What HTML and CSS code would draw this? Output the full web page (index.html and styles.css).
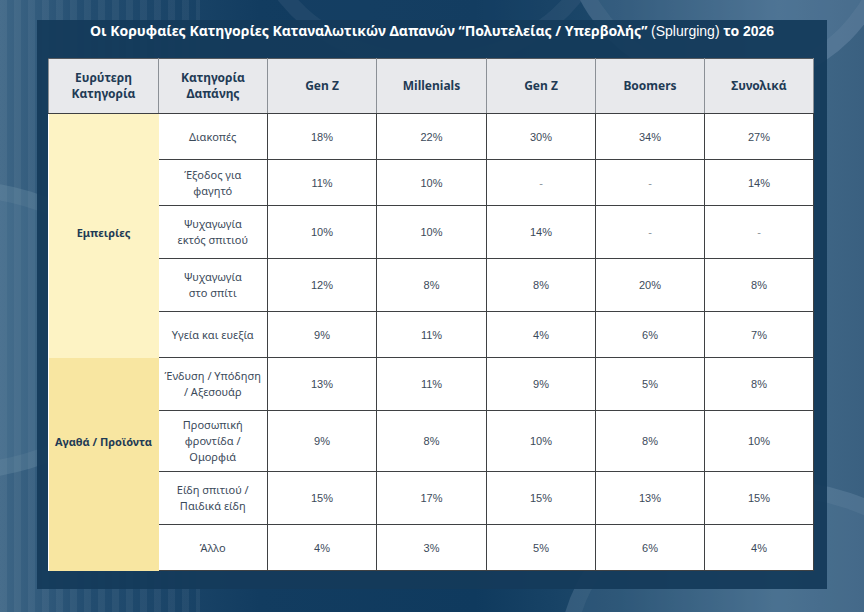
FILE: index.html
```html
<!DOCTYPE html>
<html lang="el">
<head>
<meta charset="utf-8">
<title>Κατηγορίες Δαπανών 2026</title>
<link rel="stylesheet" href="styles.css">
</head>
<body>
<div class="page">
  <div class="ring ring-a"></div>
  <div class="ring ring-b"></div>
  <div class="ring ring-c"></div>
  <div class="ring ring-d"></div>
  <div class="panel">
    <h1 class="title">Οι Κορυφαίες Κατηγορίες Καταναλωτικών Δαπανών “Πολυτελείας / Υπερβολής” <span class="light">(Splurging)</span> το <span class="year">2026</span></h1>
    <table class="grid">
      <colgroup>
        <col class="c1"><col class="c2"><col class="c3"><col class="c4"><col class="c5"><col class="c6"><col class="c7">
      </colgroup>
      <thead>
        <tr class="hrow">
          <th>Ευρύτερη<br>Κατηγορία</th>
          <th>Κατηγορία<br>Δαπάνης</th>
          <th>Gen Z</th>
          <th>Millenials</th>
          <th>Gen Z</th>
          <th>Boomers</th>
          <th>Συνολικά</th>
        </tr>
      </thead>
      <tbody>
        <tr class="r46">
          <td class="grp exp"></td>
          <td class="cat">Διακοπές</td>
          <td class="num">18%</td><td class="num">22%</td><td class="num">30%</td><td class="num">34%</td><td class="num">27%</td>
        </tr>
        <tr class="r46">
          <td class="grp exp"></td>
          <td class="cat">Έξοδος για<br>φαγητό</td>
          <td class="num">11%</td><td class="num">10%</td><td class="num dash">-</td><td class="num dash">-</td><td class="num">14%</td>
        </tr>
        <tr class="r53">
          <td class="grp exp">Εμπειρίες</td>
          <td class="cat">Ψυχαγωγία<br>εκτός σπιτιού</td>
          <td class="num">10%</td><td class="num">10%</td><td class="num">14%</td><td class="num dash">-</td><td class="num dash">-</td>
        </tr>
        <tr class="r53">
          <td class="grp exp"></td>
          <td class="cat">Ψυχαγωγία<br>στο σπίτι</td>
          <td class="num">12%</td><td class="num">8%</td><td class="num">8%</td><td class="num">20%</td><td class="num">8%</td>
        </tr>
        <tr class="r46">
          <td class="grp exp"></td>
          <td class="cat">Υγεία και ευεξία</td>
          <td class="num">9%</td><td class="num">11%</td><td class="num">4%</td><td class="num">6%</td><td class="num">7%</td>
        </tr>
        <tr class="r53">
          <td class="grp goods"></td>
          <td class="cat">Ένδυση / Υπόδηση<br>/ Αξεσουάρ</td>
          <td class="num">13%</td><td class="num">11%</td><td class="num">9%</td><td class="num">5%</td><td class="num">8%</td>
        </tr>
        <tr class="r61">
          <td class="grp goods">Αγαθά / Προϊόντα</td>
          <td class="cat">Προσωπική<br>φροντίδα /<br>Ομορφιά</td>
          <td class="num">9%</td><td class="num">8%</td><td class="num">10%</td><td class="num">8%</td><td class="num">10%</td>
        </tr>
        <tr class="r53">
          <td class="grp goods"></td>
          <td class="cat">Είδη σπιτιού /<br>Παιδικά είδη</td>
          <td class="num">15%</td><td class="num">17%</td><td class="num">15%</td><td class="num">13%</td><td class="num">15%</td>
        </tr>
        <tr class="r46">
          <td class="grp goods"></td>
          <td class="cat">Άλλο</td>
          <td class="num">4%</td><td class="num">3%</td><td class="num">5%</td><td class="num">6%</td><td class="num">4%</td>
        </tr>
      </tbody>
    </table>
  </div>
</div>
</body>
</html>
```

FILE: styles.css
```css
* { box-sizing: border-box; }

html, body {
  margin: 0;
  padding: 0;
}

body {
  width: 864px;
  height: 612px;
  overflow: hidden;
  font-family: "Noto Sans", "Open Sans", sans-serif;
}

.page {
  position: relative;
  width: 864px;
  height: 612px;
  padding: 20px 37px 23px 37px;
  overflow: hidden;
  background:
    repeating-linear-gradient(90deg, rgba(255,255,255,0.05) 0 7px, rgba(255,255,255,0) 7px 14px) 0 0 / 200px 100% no-repeat,
    linear-gradient(90deg, #3e6686 0%, #234d70 10%, #123c60 30%, #0f3a5e 55%, #1f4a6c 72%, #426a8a 90%, #3a6080 100%);
}

.ring {
  position: absolute;
  border-radius: 50%;
  border: 16px solid rgba(255,255,255,0.05);
}

.ring-a {
  width: 420px;
  height: 300px;
  left: -260px;
  top: 180px;
  background: rgba(90,130,160,0.25);
}

.ring-b {
  width: 340px;
  height: 340px;
  left: 560px;
  top: -250px;
  background: rgba(110,145,175,0.28);
}

.ring-c {
  width: 420px;
  height: 340px;
  left: 560px;
  top: 480px;
  background: rgba(110,145,175,0.2);
}

.ring-d {
  width: 360px;
  height: 300px;
  left: 250px;
  top: -230px;
  background: rgba(30,70,105,0.3);
}

.panel {
  position: relative;
  width: 790px;
  height: 569px;
  padding: 0 11px;
  background: rgba(20, 58, 90, 0.94);
}

.title {
  margin: 0 0 16px 0;
  height: 22px;
  line-height: 22px;
  font-size: 14px;
  font-weight: 700;
  color: #ffffff;
  text-align: center;
  white-space: nowrap;
}

.title .light {
  font-family: "Liberation Sans", Arial, sans-serif;
  font-weight: 400;
}

.title .year {
  font-family: "Liberation Sans", Arial, sans-serif;
  font-weight: 700;
}

.grid {
  width: 765px;
  table-layout: fixed;
  border-collapse: collapse;
  background: #ffffff;
}

.c1 { width: 110px; }
.c2 { width: 109px; }
.c3 { width: 109px; }
.c4 { width: 110px; }
.c5 { width: 109px; }
.c6 { width: 109px; }
.c7 { width: 109px; }

.hrow { height: 55px; }
.r46 { height: 46px; }
.r53 { height: 53px; }
.r61 { height: 61px; }

th {
  background: #e8e9ec;
  color: #1f3b55;
  font-size: 12px;
  font-weight: 700;
  line-height: 16px;
  text-align: center;
  vertical-align: middle;
  padding: 0 4px;
  border: 1px solid #8b9096;
  border-top-color: #55595e;
  border-bottom-color: #3d3f42;
}

td {
  padding: 0 4px;
  text-align: center;
  vertical-align: middle;
  color: #3b4a5a;
  border: 1px solid #3f4143;
}

.cat {
  font-size: 11px;
  line-height: 16px;
  border-left: none;
}

.num {
  font-family: "Liberation Sans", Arial, sans-serif;
  font-size: 11px;
}

.dash {
  color: #8a929a;
}

.grp {
  border: none;
  font-size: 11px;
  font-weight: 700;
  color: #1f3b55;
  white-space: nowrap;
}

.exp { background: #fdf3c4; }
.goods { background: #f8e6a1; }
```
